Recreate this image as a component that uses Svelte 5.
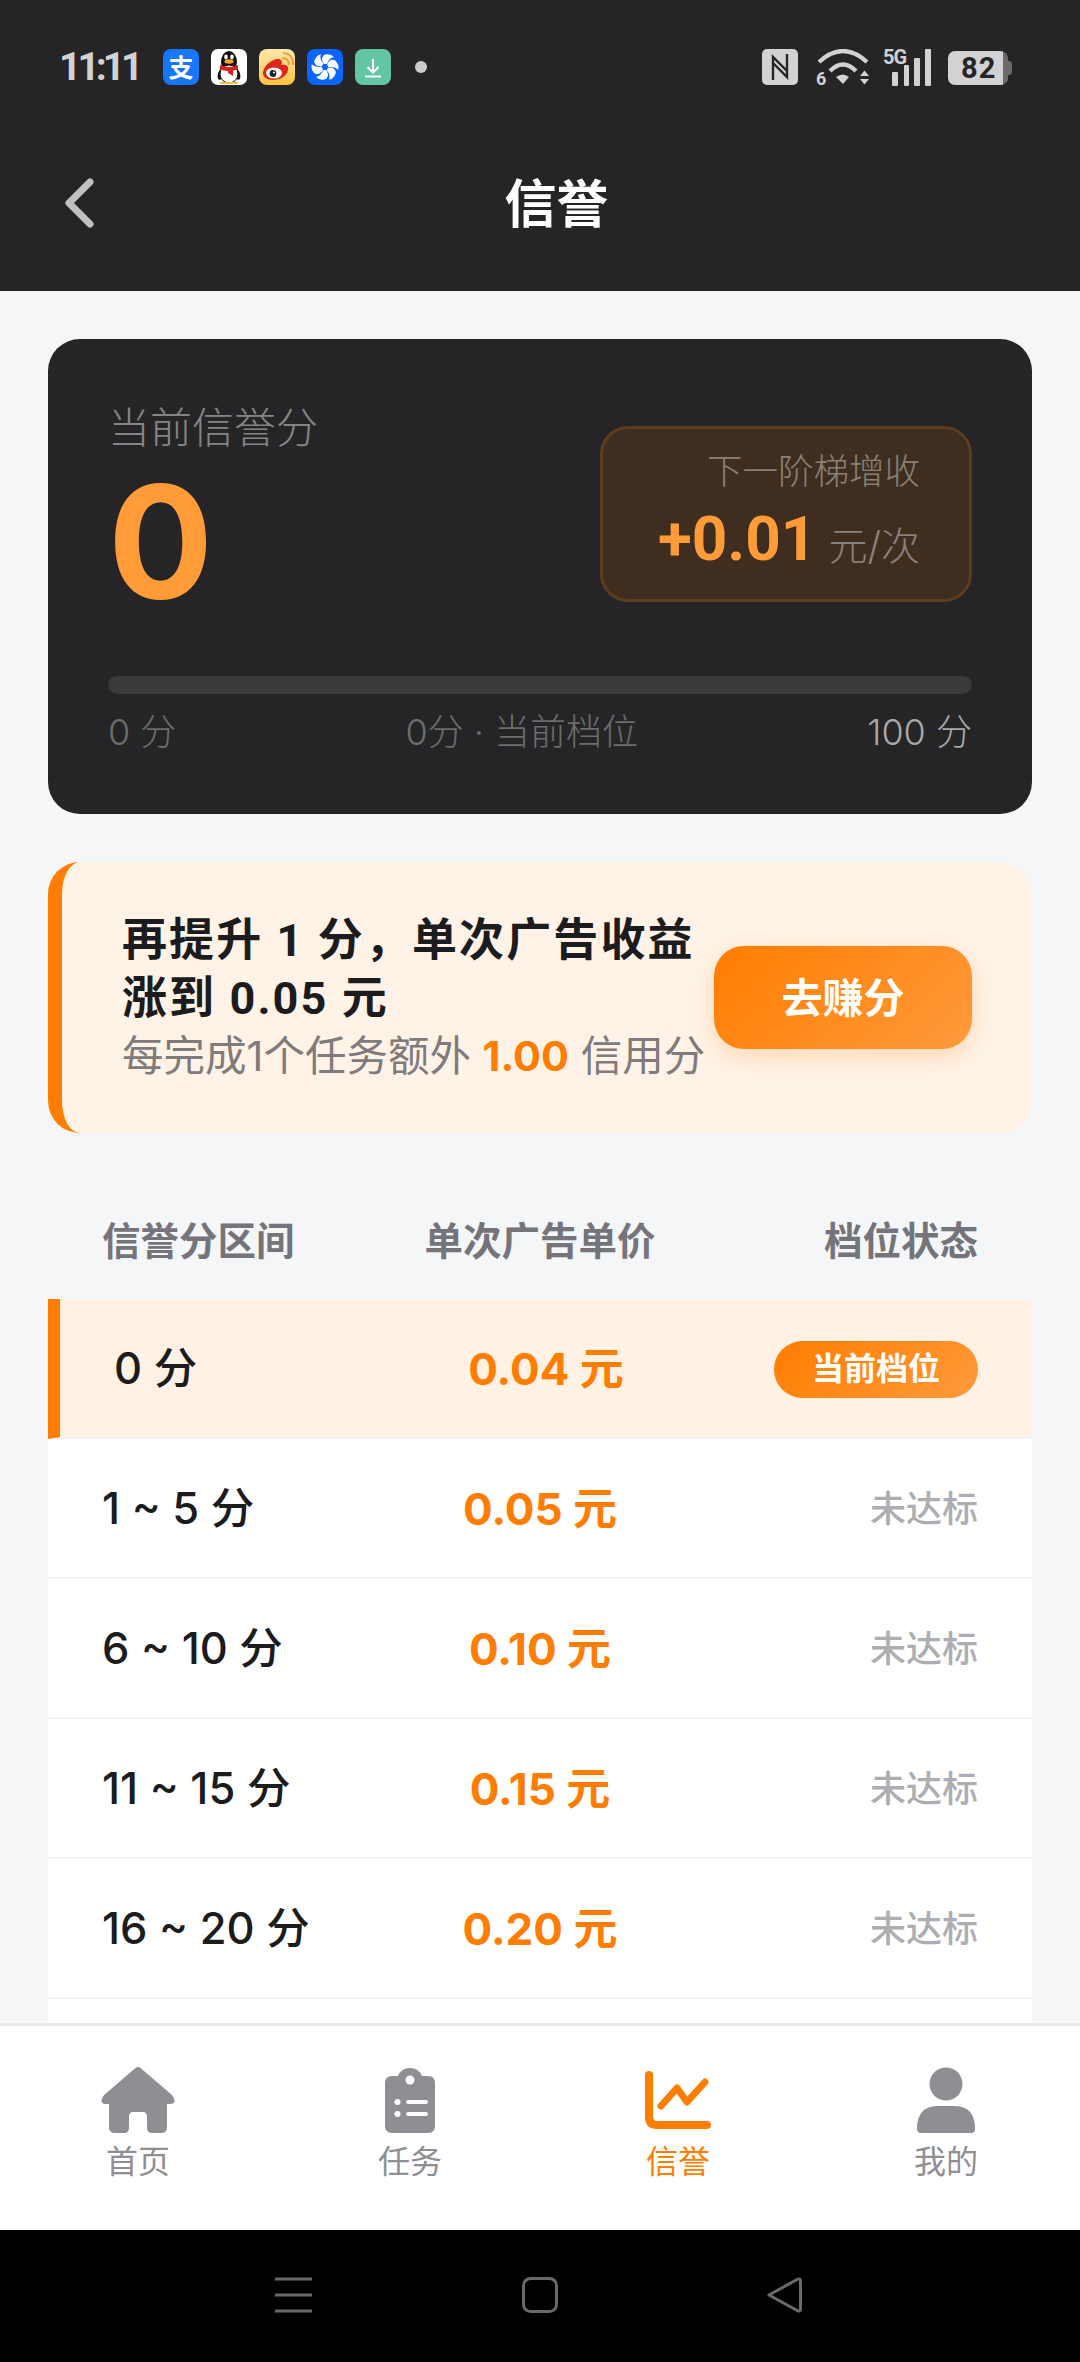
<script>
  const rows = [
    { range: '0 分', price: '0.04 元', current: true },
    { range: '1 ~ 5 分', price: '0.05 元' },
    { range: '6 ~ 10 分', price: '0.10 元' },
    { range: '11 ~ 15 分', price: '0.15 元' },
    { range: '16 ~ 20 分', price: '0.20 元' }
  ];
  const blades = [0, 60, 120, 180, 240, 300];
</script>

<div class="page">
  <header class="header">
    <div class="status">
      <span class="time">11:11</span>
      <div class="apps">
        <svg class="app" viewBox="0 0 36 36"><rect width="36" height="36" rx="8" fill="#1677ff"/><text x="18" y="28" text-anchor="middle" class="zhi">支</text></svg>
        <svg class="app" viewBox="0 0 36 36"><rect width="36" height="36" rx="7" fill="#fff"/><ellipse cx="10" cy="25" rx="3" ry="6" fill="#111" transform="rotate(18 10 25)"/><ellipse cx="26" cy="25" rx="3" ry="6" fill="#111" transform="rotate(-18 26 25)"/><ellipse cx="18" cy="13" rx="8" ry="11" fill="#111"/><ellipse cx="18" cy="25" rx="9" ry="9" fill="#fff" stroke="#111" stroke-width="1"/><path d="M9 16 Q18 20 27 16 L27 20 Q24 21 22 22 L22 27 L17 24 L17 22 Q12 22 9 20Z" fill="#d8231f"/><ellipse cx="18" cy="12.5" rx="4.5" ry="2.2" fill="#f5a623"/><ellipse cx="15" cy="8" rx="1.8" ry="2.4" fill="#fff"/><ellipse cx="21" cy="8" rx="1.8" ry="2.4" fill="#fff"/><rect x="9" y="33" width="18" height="2" rx="1" fill="#f0c040"/></svg>
        <svg class="app" viewBox="0 0 36 36"><defs><linearGradient id="wb" x1="0" y1="0" x2="0" y2="1"><stop offset="0" stop-color="#ffe9ae"/><stop offset="1" stop-color="#ffc43e"/></linearGradient></defs><rect width="36" height="36" rx="8" fill="url(#wb)"/><path d="M4 24 C4 17 14 9 20 10 C24 11 23 15 22 16 C27 15 30 17 29 21 C28 27 21 31 14 31 C8 31 4 28 4 24Z" fill="#e2231a"/><ellipse cx="15" cy="24" rx="8" ry="5.5" fill="#fff"/><circle cx="14" cy="24.5" r="3.4" fill="#222"/><circle cx="15" cy="23.5" r="1" fill="#fff"/><path d="M23 9 Q30 9 30 16" fill="none" stroke="#f5a040" stroke-width="2"/><path d="M24 4 Q35 5 34 16" fill="none" stroke="#f5a040" stroke-width="2"/></svg>
        <svg class="app" viewBox="0 0 36 36"><rect width="36" height="36" rx="8" fill="#0a66ff"/>{#each blades as b}<path d="M17 15 Q13 10 17 6 Q23 4 27 8 Q22 9 20 15Z" fill="#fff" transform="rotate({b} 18 18)"/>{/each}</svg>
        <svg class="app" viewBox="0 0 36 36"><rect width="36" height="36" rx="8" fill="#62c6a5"/><path d="M18 10 V23 M12.5 18 L18 23.5 L23.5 18 M10 27.5 H26" fill="none" stroke="#fff" stroke-width="2"/></svg>
        <span class="dot"></span>
      </div>
      <div class="sys">
        <svg class="nfc" viewBox="0 0 36 36"><rect width="36" height="36" rx="5" fill="#d2d2d2"/><path d="M11 31 V8 L25 22 M25 5 V28 L11 14" fill="none" stroke="#252527" stroke-width="2.4"/></svg>
        <div class="wifi">
          <svg viewBox="0 0 53 36"><path d="M3 13 Q27 -9 51 13" fill="none" stroke="#d2d2d2" stroke-width="4.2"/><path d="M14 22 Q27 9 40 22" fill="none" stroke="#d2d2d2" stroke-width="4.2"/><path d="M20 28 Q27 23 33 28 L27 35Z" fill="#d2d2d2"/><path d="M44 27 L48.500 21.500 L53 27Z M44 30 H53 L48.500 35.500Z" fill="#d2d2d2"/></svg>
          <span class="six">6</span>
        </div>
        <div class="signal">
          <svg viewBox="0 0 48 38"><rect x="9" y="24" width="6" height="14" rx="1" fill="#d2d2d2"/><rect x="21" y="17" width="5" height="21" rx="1" fill="#d2d2d2"/><rect x="31" y="10" width="6" height="28" rx="1" fill="#d2d2d2"/><rect x="42" y="1" width="6" height="37" rx="1" fill="#d2d2d2"/></svg>
          <span class="fiveg">5G</span>
        </div>
        <div class="battery"><span class="level">82</span></div>
      </div>
    </div>
    <div class="titlebar">
      <svg class="back" viewBox="0 0 30 50"><path d="M25 4 L4 25 L25 46" fill="none" stroke="#c0c0c0" stroke-width="7" stroke-linecap="round" stroke-linejoin="round"/></svg>
      <h1>信誉</h1>
    </div>
  </header>

  <main class="main">
    <section class="card">
      <div class="top">
        <div class="score">
          <div class="label">当前信誉分</div>
          <div class="big">0</div>
        </div>
        <div class="next">
          <div class="next-label">下一阶梯增收</div>
          <div class="next-val"><b>+0.01</b> <span>元/次</span></div>
        </div>
      </div>
      <div class="track"></div>
      <div class="scale">
        <span>0 分</span>
        <span>0分 · 当前档位</span>
        <span class="max">100 分</span>
      </div>
    </section>

    <section class="banner">
      <div class="banner-text">
        <div class="banner-title">再提升 1 分，单次广告收益<br />涨到 0.05 元</div>
        <div class="banner-sub">每完成1个任务额外 <b>1.00</b> 信用分</div>
      </div>
      <button class="earn">去赚分</button>
    </section>

    <div class="thead">
      <span>信誉分区间</span>
      <span class="c">单次广告单价</span>
      <span class="r">档位状态</span>
    </div>
    {#each rows as row}
      <div class="row" class:current={row.current}>
        <span class="range">{row.range}</span>
        <span class="price">{row.price}</span>
        <span class="state">
          {#if row.current}<span class="badge">当前档位</span>{:else}未达标{/if}
        </span>
      </div>
    {/each}
    <div class="row"></div>
  </main>

  <nav class="nav">
    <div class="tab">
      <svg class="home" viewBox="0 0 74 66"><path d="M34.500 1 Q37 -1 39.500 1 L71 28 Q77 37 69 37 H66 V60 Q66 66 60 66 H51 Q46 66 46 61 V50 Q46 45 42 45 H32 Q28 45 28 50 V61 Q28 66 23 66 H14 Q8 66 8 60 V37 H5 Q-3 37 3 28Z" fill="#8e8e93"/></svg>
      <span>首页</span>
    </div>
    <div class="tab">
      <svg class="clip" viewBox="0 0 50 66"><path d="M7 9 H13 A13 13 0 0 1 37 9 H43 Q50 9 50 16 V59 Q50 66 43 66 H7 Q0 66 0 59 V16 Q0 9 7 9Z" fill="#8e8e93"/><circle cx="25" cy="13" r="4.500" fill="#fff"/><circle cx="12.500" cy="35" r="3" fill="#fff"/><circle cx="12.500" cy="47" r="3" fill="#fff"/><path d="M23 35 H41 M23 47 H41" stroke="#fff" stroke-width="4" stroke-linecap="round"/></svg>
      <span>任务</span>
    </div>
    <div class="tab active">
      <svg class="chart" viewBox="0 0 66 66"><path d="M4 8 V50 Q4 58 12 58 H62" fill="none" stroke="#ff7d00" stroke-width="8" stroke-linecap="round"/><path d="M16 39 L32 21 L42 35 L60 15" fill="none" stroke="#ff7d00" stroke-width="7" stroke-linecap="round" stroke-linejoin="round"/></svg>
      <span>信誉</span>
    </div>
    <div class="tab">
      <svg class="me" viewBox="0 0 58 66"><circle cx="29" cy="17" r="16.500" fill="#8e8e93"/><path d="M0 62 Q0 39 21 39 H37 Q58 39 58 62 Q58 66 54 66 H4 Q0 66 0 62Z" fill="#8e8e93"/></svg>
      <span>我的</span>
    </div>
  </nav>

  <footer class="sysbar">
    <svg class="menu" viewBox="0 0 37 36"><path d="M0 2 H37 M0 18 H37 M0 34 H37" stroke="#6a6a6a" stroke-width="3"/></svg>
    <svg class="square" viewBox="0 0 36 36"><rect x="1.500" y="1.500" width="33" height="33" rx="7" fill="none" stroke="#6a6a6a" stroke-width="3"/></svg>
    <svg class="tri" viewBox="0 0 35 36"><path d="M2 18 L31 2 Q33.500 1.500 33.500 4 V32 Q33.500 34.500 31 34 Z" fill="none" stroke="#6a6a6a" stroke-width="3" stroke-linejoin="round"/></svg>
  </footer>
</div>

<style>
  :global(body) {
    margin: 0;
    background: #f5f6f8;
  }
  .page {
    width: 1080px;
    height: 2362px;
    display: flex;
    flex-direction: column;
    overflow: hidden;
    font-family: Inter, "Noto Sans CJK SC", sans-serif;
    color: #1c1c1e;
  }
  .header {
    height: 291px;
    flex: none;
    background: #252527;
  }
  .status {
    height: 115px;
    box-sizing: border-box;
    padding: 49px 72px 0 60px;
    display: flex;
    align-items: flex-start;
  }
  .time {
    font: 700 39px/36px Roboto, sans-serif;
    letter-spacing: -4px;
    color: #d2d2d2;
    width: 103px;
    margin-left: -1px;
    padding-right: 1px;
  }
  .apps {
    display: flex;
    align-items: center;
    gap: 12px;
    height: 36px;
  }
  .app {
    width: 36px;
    height: 36px;
    display: block;
  }
  .zhi {
    font: 700 25px "Noto Sans CJK SC", sans-serif;
    fill: #fff;
  }
  .dot {
    width: 12px;
    height: 12px;
    border-radius: 50%;
    background: #cccccc;
    margin-left: 12px;
  }
  .sys {
    margin-left: auto;
    display: flex;
    align-items: flex-start;
    height: 36px;
  }
  .nfc {
    width: 36px;
    height: 36px;
    display: block;
  }
  .wifi {
    position: relative;
    width: 53px;
    height: 36px;
    margin-left: 18px;
  }
  .wifi svg,
  .signal svg {
    display: block;
    width: 100%;
    height: 100%;
  }
  .six {
    position: absolute;
    left: 0;
    top: 21px;
    font: 700 18px/18px Roboto, sans-serif;
    color: #d2d2d2;
  }
  .signal {
    position: relative;
    width: 48px;
    height: 38px;
    margin: -1px 0 0 14px;
  }
  .fiveg {
    position: absolute;
    left: 0;
    top: -1px;
    font: 700 20px/20px Roboto, sans-serif;
    color: #d2d2d2;
    letter-spacing: -1px;
  }
  .battery {
    position: relative;
    width: 60px;
    height: 34px;
    margin: 2px 0 0 17px;
    border-radius: 7px 8px 7px 7px;
    background: linear-gradient(90deg, #d2d2d2 0 55px, #6a6a6a 55px);
    display: flex;
    align-items: center;
  }
  .battery::after {
    content: "";
    position: absolute;
    right: -4px;
    top: 10px;
    width: 4px;
    height: 14px;
    border-radius: 0 3px 3px 0;
    background: #6a6a6a;
  }
  .level {
    font: 700 29px/34px Roboto, sans-serif;
    color: #252527;
    margin-left: 13px;
    letter-spacing: 1px;
  }
  .titlebar {
    height: 176px;
    box-sizing: border-box;
    padding-bottom: 4px;
    position: relative;
    display: flex;
    align-items: center;
    justify-content: center;
  }
  .back {
    position: absolute;
    left: 65px;
    top: 63px;
    width: 30px;
    height: 50px;
  }
  h1 {
    margin: 0 0 0 33px;
    font: 700 52px/1 "Noto Sans CJK SC", sans-serif;
    color: #fff;
  }
  .main {
    flex: 1;
    min-height: 0;
    overflow: hidden;
    box-sizing: border-box;
    padding: 48px 48px 0 48px;
  }
  .card {
    height: 475px;
    box-sizing: border-box;
    background: #252527;
    border-radius: 32px;
    padding: 62px 60px 0 60px;
  }
  .top {
    height: 220px;
    display: flex;
    justify-content: space-between;
  }
  .label {
    font-size: 42px;
    line-height: 54px;
    font-weight: 300;
    color: #858585;
    margin-bottom: 6px;
  }
  .big {
    font: 700 156px/162px Inter, sans-serif;
    color: #ff9c38;
    margin-left: 0;
  }
  .next {
    width: 372px;
    height: 176px;
    margin-top: 25px;
    box-sizing: border-box;
    border: 3px solid #5e3c1e;
    border-radius: 28px;
    background: #3f2e20;
    padding: 20px 49px 0 0;
    text-align: right;
    color: #8a8078;
    font-size: 35.500px;
    font-weight: 300;
  }
  .next-label {
    line-height: 46px;
  }
  .next-val {
    margin-top: 13px;
    line-height: 62px;
    white-space: nowrap;
  }
  .next-val span {
    font-size: 39px;
  }
  .next-val b {
    font: 700 62px/62px Roboto, sans-serif;
    color: #ff9c38;
    margin-right: 2px;
  }
  .track {
    height: 18px;
    border-radius: 9px;
    background: #3a3a3c;
    margin-top: 55px;
  }
  .scale {
    margin-top: 16px;
    display: flex;
    justify-content: space-between;
    font-size: 36px;
    line-height: 44px;
    font-weight: 300;
    color: #6c6c6c;
  }
  .max {
    color: #a8a8a8;
  }
  .banner {
    height: 271px;
    box-sizing: border-box;
    margin-top: 48px;
    border-left: 14px solid #ff7d00;
    border-radius: 32px;
    background: #fff3e7;
    padding: 0 60px;
    display: flex;
    align-items: center;
    justify-content: space-between;
  }
  .banner-title {
    font-family: Roboto, "Noto Sans CJK SC", sans-serif;
    font-size: 45px;
    line-height: 58px;
    font-weight: 700;
    letter-spacing: 2.100px;
    color: #1c1c1e;
    white-space: nowrap;
  }
  .banner-sub {
    font-size: 41.500px;
    line-height: 56px;
    color: #807b7a;
    font-weight: 400;
    white-space: nowrap;
  }
  .banner-sub b {
    color: #ff7d00;
    font-weight: 700;
  }
  .earn {
    width: 258px;
    height: 103px;
    border: 0;
    padding: 0 0 6px;
    border-radius: 30px;
    background: linear-gradient(135deg, #ff7d00, #ff9a3c);
    box-shadow: 0 8px 24px rgba(255, 125, 0, 0.22);
    color: #fff;
    font: 700 41px "Noto Sans CJK SC", sans-serif;
  }
  .thead {
    margin-top: 48px;
    height: 118px;
    box-sizing: border-box;
    padding: 0 54px 5px;
    display: grid;
    grid-template-columns: 1fr 1fr 1fr;
    align-items: center;
    font-size: 38.500px;
    font-weight: 700;
    color: #74747a;
    white-space: nowrap;
  }
  .c {
    text-align: center;
  }
  .r {
    text-align: right;
  }
  .row {
    height: 140px;
    box-sizing: border-box;
    padding: 0 54px 5px;
    display: grid;
    grid-template-columns: 1fr 1fr 1fr;
    align-items: center;
    background: #fff;
    border-bottom: 2px solid #f2f2f4;
  }
  .row.current {
    background: #fff2e5;
    border-left: 12px solid #ff7d00;
  }
  .range {
    font-size: 43.500px;
    font-weight: 500;
    white-space: nowrap;
  }
  .price {
    font-size: 44px;
    font-weight: 700;
    color: #ff7d00;
    text-align: center;
    white-space: nowrap;
  }
  .state {
    text-align: right;
    font-size: 36px;
    font-weight: 500;
    color: #aeaeb2;
  }
  .badge {
    display: block;
    width: fit-content;
    margin: 8px 0 0 auto;
    height: 57px;
    line-height: 55px;
    padding: 0 38px;
    border-radius: 29px;
    background: linear-gradient(135deg, #ff7d00, #ff9a3c);
    color: #fff;
    font-size: 32px;
    font-weight: 700;
  }
  .nav {
    flex: none;
    height: 207px;
    box-sizing: border-box;
    background: #fff;
    border-top: 3px solid #e9e9eb;
    display: grid;
    grid-template-columns: 276px 268px 268px 268px;
  }
  .tab {
    padding-top: 41px;
    display: flex;
    flex-direction: column;
    align-items: center;
    color: #8e8e93;
    font-size: 32px;
    line-height: 44px;
  }
  .tab svg {
    height: 66px;
    display: block;
    margin-bottom: 7px;
  }
  .tab span {
    display: block;
  }
  .tab.active {
    color: #ff7d00;
  }
  .home { width: 74px; }
  .clip { width: 50px; }
  .chart { width: 66px; }
  .me { width: 58px; }
  .sysbar {
    flex: none;
    height: 132px;
    background: #000;
    position: relative;
  }
  .sysbar svg {
    position: absolute;
    top: 47px;
    height: 36px;
  }
  .menu { left: 275px; width: 37px; }
  .square { left: 522px; width: 36px; }
  .tri { left: 767px; width: 35px; }
</style>
